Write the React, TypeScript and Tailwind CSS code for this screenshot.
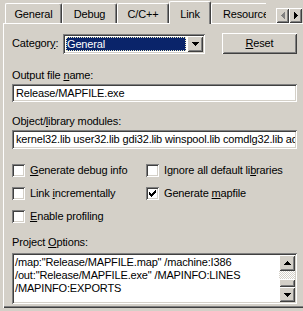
import type { ReactNode } from "react";

const sunken =
  "shadow-[inset_1px_1px_#808080,inset_-1px_-1px_#ffffff,inset_2px_2px_#404040,inset_-2px_-2px_#d4d0c8]";
const raised =
  "shadow-[inset_1px_1px_#ffffff,inset_-1px_-1px_#404040,inset_2px_2px_#d4d0c8,inset_-2px_-2px_#808080]";

const TABS = [
  { label: "General", cls: "w-[57px] justify-center" },
  { label: "Debug", cls: "w-[55px] justify-center" },
  { label: "C/C++", cls: "w-[52px] justify-center" },
  { label: "Link", cls: "w-[42px] justify-center", active: true },
  { label: "Resources", cls: "w-[80px] pl-[11px]" },
];

// little pixel triangles used on scroll / drop buttons
function Tri({ dir, color = "#000" }: { dir: "up" | "down" | "left" | "right"; color?: string }) {
  const rows = [0, 1, 2, 3];
  const vertical = dir === "up" || dir === "down";
  return (
    <svg width={vertical ? 7 : 4} height={vertical ? 4 : 7} shapeRendering="crispEdges">
      {rows.map((i) => {
        if (dir === "down") return <rect key={i} x={i} y={i} width={7 - 2 * i} height={1} fill={color} />;
        if (dir === "up") return <rect key={i} x={3 - i} y={i} width={1 + 2 * i} height={1} fill={color} />;
        if (dir === "right") return <rect key={i} x={i} y={i} width={1} height={7 - 2 * i} fill={color} />;
        return <rect key={i} x={i} y={3 - i} width={1} height={1 + 2 * i} fill={color} />;
      })}
    </svg>
  );
}

function Check({ checked, children }: { checked?: boolean; children: ReactNode }) {
  return (
    <div className="flex items-center h-[23px]">
      <span className={`w-[13px] h-[13px] shrink-0 bg-white flex items-center justify-center ${sunken}`}>
        {checked && (
          <svg width="7" height="7" shapeRendering="crispEdges">
            {[2, 3, 4, 3, 2, 1, 0].map((y, x) => (
              <rect key={x} x={x} y={y} width={1} height={3} fill="#000" />
            ))}
          </svg>
        )}
      </span>
      <span className="ml-[5px] whitespace-nowrap">{children}</span>
    </div>
  );
}

export default function App() {
  return (
    <div className="relative w-[303px] h-[311px] overflow-hidden bg-[#d4d0c8] font-['Liberation_Sans',Arial,sans-serif] text-[11px] leading-[13px] tracking-[-0.15px] text-black">
      {/* Tab strip */}
      <div className="relative z-10 flex items-end h-[24px] w-[266px] overflow-hidden pl-[5px]">
        {TABS.map((t) =>
          t.active ? (
            <div
              key={t.label}
              className={`shrink-0 h-[23px] flex pt-[6px] bg-[#d4d0c8] rounded-t-[2px] border-t border-l border-white border-r border-r-[#404040] shadow-[inset_-1px_0_#808080] ${t.cls}`}
            >
              {t.label}
            </div>
          ) : (
            <div
              key={t.label}
              className={`shrink-0 h-[20px] mb-[1px] flex pt-[4px] whitespace-nowrap rounded-t-[2px] border-t border-l border-white border-r border-r-[#404040] shadow-[inset_-1px_0_#808080] ${t.cls}`}
            >
              {t.label}
            </div>
          )
        )}
      </div>

      {/* tab scroll arrows */}
      <div className="absolute left-[276px] top-[8px] z-20 flex">
        <div className={`w-[13px] h-[15px] bg-[#d4d0c8] flex items-center justify-center ${raised}`}>
          <Tri dir="left" color="#808080" />
        </div>
        <div className={`w-[13px] h-[15px] bg-[#d4d0c8] flex items-center justify-center ${raised}`}>
          <Tri dir="right" />
        </div>
      </div>

      {/* Page */}
      <div className="-mt-[1px] ml-[3px] w-[320px] h-[285px] pl-[9px] pt-[10px] shadow-[inset_1px_1px_#ffffff,inset_0_-1px_#404040,inset_0_-2px_#808080]">
        <div className="w-[285px] flex flex-col">
          {/* Category */}
          <div className="flex items-center h-[21px]">
            <div className="w-[51px]">
              Categor<u>y</u>:
            </div>
            <div className={`w-[142px] h-[20px] bg-white flex p-[2px] ${sunken}`}>
              <div className="flex-1 m-[1px] bg-[#0a246a] text-white border border-dotted border-[#e8e8c0] leading-[12px]">
                General
              </div>
              <div className={`w-[16px] h-full bg-[#d4d0c8] flex items-center justify-center ${raised}`}>
                <Tri dir="down" />
              </div>
            </div>
            <div className={`ml-auto w-[75px] h-[21px] flex items-center justify-center bg-[#d4d0c8] ${raised}`}>
              <span>
                <u>R</u>eset
              </span>
            </div>
          </div>

          {/* Output file */}
          <div className="mt-[15px]">
            Output file <u>n</u>ame:
          </div>
          <div className={`mt-[2px] h-[18px] bg-white flex items-center pl-[4px] ${sunken}`}>Release/MAPFILE.exe</div>

          {/* Modules */}
          <div className="mt-[13px]">
            Object/<u>l</u>ibrary modules:
          </div>
          <div className={`mt-[2px] h-[19px] bg-white flex items-center pl-[4px] pr-[2px] overflow-hidden ${sunken}`}>
            <span className="whitespace-nowrap overflow-hidden">
              kernel32.lib user32.lib gdi32.lib winspool.lib comdlg32.lib advapi32.lib shell32.lib
            </span>
          </div>

          {/* Options */}
          <div className="mt-[10px] grid grid-cols-[134px_1fr]">
            <Check>
              <u>G</u>enerate debug info
            </Check>
            <Check>
              Ignore all default li<u>b</u>raries
            </Check>
            <Check>
              Link <u>i</u>ncrementally
            </Check>
            <Check checked>
              Generate <u>m</u>apfile
            </Check>
            <Check>
              <u>E</u>nable profiling
            </Check>
          </div>

          {/* Project options */}
          <div className="mt-[8px]">
            Project <u>O</u>ptions:
          </div>
          <div className={`mt-[4px] h-[51px] bg-white flex p-[2px] ${sunken}`}>
            <div className="flex-1 pl-[1px] pt-[1px] whitespace-pre">
              {'/map:"Release/MAPFILE.map" /machine:I386\n/out:"Release/MAPFILE.exe" /MAPINFO:LINES\n/MAPINFO:EXPORTS'}
            </div>
            <div className="w-[16px] flex flex-col">
              <div className={`h-[16px] bg-[#d4d0c8] flex items-center justify-center ${raised}`}>
                <Tri dir="up" />
              </div>
              <div className="h-[8px] bg-[repeating-conic-gradient(#ffffff_0%_25%,#d4d0c8_0%_50%)] bg-[length:2px_2px]" />
              <div className={`h-[8px] bg-[#d4d0c8] ${raised}`} />
              <div className={`flex-1 bg-[#d4d0c8] flex items-center justify-center ${raised}`}>
                <Tri dir="down" />
              </div>
            </div>
          </div>
        </div>
      </div>
    </div>
  );
}
